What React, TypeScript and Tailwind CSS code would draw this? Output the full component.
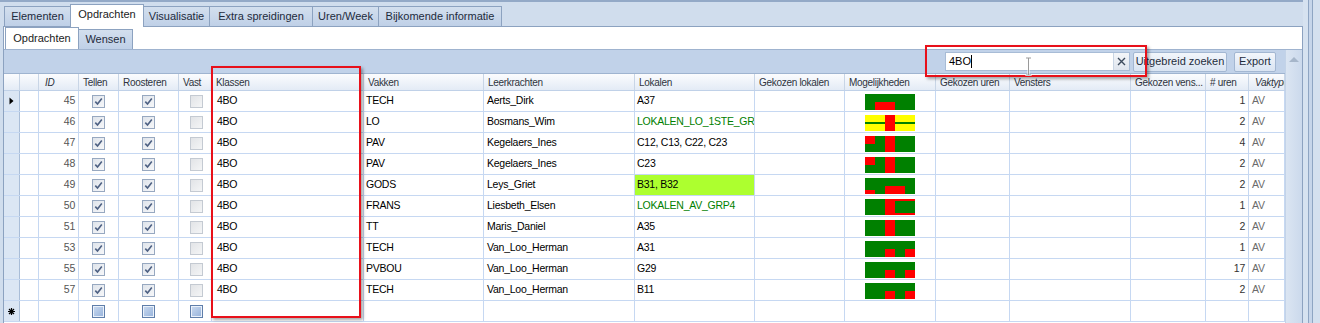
import React from 'react';

const FONT = "font-['Liberation_Sans',Arial,sans-serif]";

type Row = {
  id: number;
  vak: string;
  lk: string;
  lok: string;
  lokStyle?: 'green' | 'lime';
  uren: number;
  pat: number;
};

const rows: Row[] = [
  { id: 45, vak: 'TECH', lk: 'Aerts_Dirk', lok: 'A37', uren: 1, pat: 0 },
  { id: 46, vak: 'LO', lk: 'Bosmans_Wim', lok: 'LOKALEN_LO_1STE_GR', lokStyle: 'green', uren: 2, pat: 1 },
  { id: 47, vak: 'PAV', lk: 'Kegelaers_Ines', lok: 'C12, C13, C22, C23', uren: 4, pat: 2 },
  { id: 48, vak: 'PAV', lk: 'Kegelaers_Ines', lok: 'C23', uren: 2, pat: 2 },
  { id: 49, vak: 'GODS', lk: 'Leys_Griet', lok: 'B31, B32', lokStyle: 'lime', uren: 2, pat: 3 },
  { id: 50, vak: 'FRANS', lk: 'Liesbeth_Elsen', lok: 'LOKALEN_AV_GRP4', lokStyle: 'green', uren: 1, pat: 4 },
  { id: 51, vak: 'TT', lk: 'Maris_Daniel', lok: 'A35', uren: 2, pat: 5 },
  { id: 53, vak: 'TECH', lk: 'Van_Loo_Herman', lok: 'A31', uren: 1, pat: 6 },
  { id: 55, vak: 'PVBOU', lk: 'Van_Loo_Herman', lok: 'G29', uren: 17, pat: 6 },
  { id: 57, vak: 'TECH', lk: 'Van_Loo_Herman', lok: 'B11', uren: 2, pat: 6 },
];

const R = '#ff0000';
const G = '#008000';

// availability bars: [x, y, w, h, colour] on a 50x16 canvas
const patterns: { bg: string; rects: [number, number, number, number, string][] }[] = [
  { bg: G, rects: [[10, 8, 20, 8, R]] },
  { bg: '#ffff00', rects: [[0, 7, 50, 2, G], [20, 0, 10, 16, R]] },
  { bg: G, rects: [[0, 0, 10, 8, R], [20, 0, 10, 16, R]] },
  { bg: G, rects: [[0, 12, 10, 4, R], [20, 8, 20, 8, R]] },
  { bg: G, rects: [[20, 0, 10, 16, R], [20, 0, 30, 2, R], [30, 14, 20, 2, R]] },
  { bg: G, rects: [[20, 0, 10, 16, R]] },
  { bg: G, rects: [[20, 8, 10, 8, R], [40, 8, 10, 8, R]] },
];

const Bar = ({ p }: { p: number }) => {
  const pat = patterns[p];
  return (
    <svg width="50" height="16" viewBox="0 0 50 16" shapeRendering="crispEdges">
      <rect width="50" height="16" fill={pat.bg} />
      {pat.rects.map(([x, y, w, h, c], i) => (
        <rect key={i} x={x} y={y} width={w} height={h} fill={c} />
      ))}
    </svg>
  );
};

const Check = ({ kind }: { kind: 'on' | 'off' | 'new' }) => {
  if (kind === 'new') {
    return (
      <div className="w-[13px] h-[13px] border border-[#5f7eaa] bg-[#eaf1fa] p-[1px]">
        <div className="w-full h-full bg-linear-to-br from-[#c6d7ee] to-[#9ab5dc]" />
      </div>
    );
  }
  if (kind === 'off') {
    return <div className="w-[13px] h-[13px] border border-[#c4cad2] bg-linear-to-br from-[#e2e4e7] to-[#f4f5f6]" />;
  }
  return (
    <div className="w-[13px] h-[13px] border border-[#97a8c0] bg-linear-to-br from-[#dfe4eb] to-[#f6f7f9] flex items-center justify-center">
      <svg width="9" height="9" viewBox="0 0 9 9">
        <path d="M1.3 4.6 L3.5 7 L7.8 1.4" fill="none" stroke="#4e6183" strokeWidth="1.6" />
      </svg>
    </div>
  );
};

const cols = [
  { w: 'w-[16px]', label: '', italic: false },
  { w: 'w-[19px]', label: '', italic: false },
  { w: 'w-[40px]', label: 'ID', italic: true },
  { w: 'w-[40px]', label: 'Tellen', italic: false },
  { w: 'w-[60px]', label: 'Roosteren', italic: false },
  { w: 'w-[33px]', label: 'Vast', italic: false },
  { w: 'w-[152px]', label: 'Klassen', italic: false },
  { w: 'w-[120px]', label: 'Vakken', italic: false },
  { w: 'w-[151px]', label: 'Leerkrachten', italic: false },
  { w: 'w-[120px]', label: 'Lokalen', italic: false },
  { w: 'w-[90px]', label: 'Gekozen lokalen', italic: false },
  { w: 'w-[91px]', label: 'Mogelijkheden', italic: false },
  { w: 'w-[74px]', label: 'Gekozen uren', italic: false },
  { w: 'w-[121px]', label: 'Vensters', italic: false },
  { w: 'w-[75px]', label: 'Gekozen vens...', italic: false },
  { w: 'w-[43px]', label: '# uren', italic: false },
  { w: 'w-[36px]', label: 'Vaktype', italic: true },
];

const cell = 'shrink-0 h-full border-r border-[#c6d8f2] flex items-center overflow-hidden whitespace-nowrap';

const mainTabs = [
  { label: 'Elementen', w: 'w-[66px]', cls: 'border-l border-t' },
  { label: 'Opdrachten', w: 'w-[74px]', cls: 'active' },
  { label: 'Visualisatie', w: 'w-[65px]', cls: 'border-t' },
  { label: 'Extra spreidingen', w: 'w-[103px]', cls: 'border-l border-t' },
  { label: 'Uren/Week', w: 'w-[66px]', cls: 'border-l border-t' },
  { label: 'Bijkomende informatie', w: 'w-[124px]', cls: 'border-l border-t border-r' },
];

const App: React.FC = () => {
  return (
    <div className={`relative w-[1320px] h-[323px] overflow-hidden flex bg-[#d0dded] text-[11px] ${FONT}`}>
      {/* left: tabs + panel */}
      <div className="w-[1303px] flex flex-col border-t-2 border-[#93a9c7]">
        {/* main tab strip */}
        <div className="h-[24px] flex items-end pl-[4px] shrink-0">
          {mainTabs.map((t) =>
            t.cls === 'active' ? (
              <div
                key={t.label}
                className={`${t.w} h-[23px] -mb-px relative z-10 bg-white border-l border-t border-r border-[#8ca2c0] flex items-center justify-center pb-[3px] text-[#1b1b1b]`}
              >
                {t.label}
              </div>
            ) : (
              <div
                key={t.label}
                className={`${t.w} ${t.cls} h-[20px] border-[#8ca2c0] bg-linear-to-b from-[#d3dfee] to-[#bfd0e7] flex items-center justify-center text-[#1e2b3c]`}
              >
                {t.label}
              </div>
            )
          )}
        </div>

        {/* white panel */}
        <div className="flex-1 ml-[3px] bg-white border-l border-t border-r border-[#8ca2c0] flex flex-col min-h-0">
          {/* sub tabs */}
          <div className="h-[22px] flex items-end pl-[1px] shrink-0">
            <div className="w-[74px] h-[22px] border-l border-t border-r border-[#8ca2c0] bg-white flex items-center justify-center text-[#1b1b1b]">
              Opdrachten
            </div>
            <div className="w-[54px] h-[20px] border-t border-r border-[#8ca2c0] bg-linear-to-b from-[#d3dfee] to-[#bfd0e7] flex items-center justify-center text-[#1e2b3c]">
              Wensen
            </div>
          </div>

          {/* grid */}
          <div className="flex-1 flex border-t border-[#9fb3cf] min-h-0">
            <div className="w-[1281px] flex flex-col overflow-hidden">
              {/* toolbar */}
              <div className="h-[23px] shrink-0 bg-[#c1d2e9] flex items-center justify-end pr-[9px]">
                <div className="flex h-[19px] border border-[#a8bcd6] bg-white">
                  <div className="w-[167px] flex items-center pl-[3px] text-black">
                    4BO<span className="w-px h-[13px] bg-black" />
                  </div>
                  <div className="w-[16px] border-l border-[#c9d5e4] bg-linear-to-b from-[#f4f6f9] to-[#dfe5ee] flex items-center justify-center">
                    <svg width="9" height="9" viewBox="0 0 9 9">
                      <path d="M1 1 L8 8 M8 1 L1 8" stroke="#3c4a5c" strokeWidth="1.4" />
                    </svg>
                  </div>
                </div>
                <div className="ml-[3px] w-[94px] h-[20px] rounded-[2px] border border-[#a3b7d2] bg-linear-to-b from-[#f3f6fb] to-[#d9e4f2] flex items-center justify-center text-[#1f2d3d]">
                  Uitgebreid zoeken
                </div>
                <div className="ml-[7px] w-[42px] h-[20px] rounded-[2px] border border-[#a3b7d2] bg-linear-to-b from-[#f3f6fb] to-[#d9e4f2] flex items-center justify-center text-[#1f2d3d]">
                  Export
                </div>
              </div>

              {/* header */}
              <div className="h-[18px] shrink-0 flex border-t border-[#9fb4d0] border-b border-b-[#c0d1e8] bg-linear-to-b from-[#fbfcfe] to-[#e3ebf6] text-[10px] tracking-[-0.3px]">
                {cols.map((c, i) => (
                  <div
                    key={i}
                    className={`${c.w} shrink-0 h-full border-r border-[#c8d5e6] flex items-center overflow-hidden whitespace-nowrap text-[#2e3440] ${c.italic ? 'italic pl-[6px]' : 'pl-[4px]'}`}
                  >
                    {c.label}
                  </div>
                ))}
              </div>

              {/* rows */}
              {rows.map((r, idx) => (
                <div key={r.id} className="h-[21px] shrink-0 flex border-b border-[#c6d8f2] text-black text-[10.5px] tracking-[-0.25px]">
                  <div className={`${cols[0].w} ${cell} bg-[#dbe6f4] justify-center border-r-[#a9bdd8]`}>
                    {idx === 0 && (
                      <svg width="5" height="8" viewBox="0 0 5 8">
                        <path d="M0.5 0.5 L4.5 4 L0.5 7.5 Z" fill="#000" />
                      </svg>
                    )}
                  </div>
                  <div className={`${cols[1].w} ${cell}`} />
                  <div className={`${cols[2].w} ${cell} justify-end pr-[3px] text-[#555]`}>{r.id}</div>
                  <div className={`${cols[3].w} ${cell} justify-center`}><Check kind="on" /></div>
                  <div className={`${cols[4].w} ${cell} justify-center`}><Check kind="on" /></div>
                  <div className={`${cols[5].w} ${cell} justify-center pl-[3px]`}><Check kind="off" /></div>
                  <div className={`${cols[6].w} ${cell} pl-[5px]`}>4BO</div>
                  <div className={`${cols[7].w} ${cell} pl-[2px]`}>{r.vak}</div>
                  <div className={`${cols[8].w} ${cell} pl-[3px]`}>{r.lk}</div>
                  <div
                    className={`${cols[9].w} ${cell} pl-[2px] ${
                      r.lokStyle === 'green' ? 'text-[#008000]' : ''
                    } ${r.lokStyle === 'lime' ? 'bg-[#adff2f]' : ''}`}
                  >
                    {r.lok}
                  </div>
                  <div className={`${cols[10].w} ${cell}`} />
                  <div className={`${cols[11].w} ${cell} justify-center pt-[2px]`}><Bar p={r.pat} /></div>
                  <div className={`${cols[12].w} ${cell}`} />
                  <div className={`${cols[13].w} ${cell}`} />
                  <div className={`${cols[14].w} ${cell}`} />
                  <div className={`${cols[15].w} ${cell} justify-end pr-[3px] text-[#333]`}>{r.uren}</div>
                  <div className={`${cols[16].w} ${cell} pl-[3px] text-[#6a6a6a]`}>AV</div>
                </div>
              ))}

              {/* new row */}
              <div className="h-[21px] shrink-0 flex border-b border-[#c6d8f2]">
                <div className={`${cols[0].w} ${cell} bg-[#dbe6f4] justify-center border-r-[#a9bdd8]`}>
                  <svg width="7" height="7" viewBox="0 0 7 7">
                    <path d="M3.5 0 V7 M0 3.5 H7 M1 1 L6 6 M6 1 L1 6" stroke="#000" strokeWidth="1.2" />
                  </svg>
                </div>
                <div className={`${cols[1].w} ${cell}`} />
                <div className={`${cols[2].w} ${cell}`} />
                <div className={`${cols[3].w} ${cell} justify-center`}><Check kind="new" /></div>
                <div className={`${cols[4].w} ${cell} justify-center`}><Check kind="new" /></div>
                <div className={`${cols[5].w} ${cell} justify-center pl-[3px]`}><Check kind="new" /></div>
                {cols.slice(6).map((c, i) => (
                  <div key={i} className={`${c.w} ${cell}`} />
                ))}
              </div>
            </div>

            {/* vertical scrollbar */}
            <div className="w-[17px] shrink-0 bg-linear-to-r from-[#dbe5f2] to-[#cbd9ec] border-l border-[#c3d3e8] flex justify-center pt-[7px]">
              <svg width="10" height="5" viewBox="0 0 10 5">
                <path d="M0 5 L5 0 L10 5 Z" fill="#a6b6ca" />
              </svg>
            </div>
          </div>
        </div>
      </div>

      {/* right frame strip */}
      <div className="w-[17px] flex">
        <div className="w-[5px] bg-[#d6e2f0]" />
        <div className="w-[5px] border-l border-r border-[#8ea5c3] bg-[#c6d5ea]" />
        <div className="flex-1 bg-[#d4e0ef]" />
      </div>

      {/* annotation: Klassen column */}
      <div className="absolute left-[211px] top-[66px] w-[150px] h-[252px] border-2 border-[#e8101a] shadow-[2px_2px_3px_rgba(0,0,0,0.35)] pointer-events-none" />
      {/* annotation: search box */}
      <div className="absolute left-[925px] top-[45px] w-[222px] h-[32px] border-2 border-[#e8101a] shadow-[2px_2px_3px_rgba(0,0,0,0.35)] pointer-events-none" />

      {/* mouse I-beam */}
      <svg className="absolute left-[1025px] top-[57px]" width="7" height="19" viewBox="0 0 7 19">
        <path d="M0.5 0.5 H6.5 M3.5 0.5 V18.5 M0.5 18.5 H6.5" stroke="#fff" strokeWidth="2" fill="none" />
        <path d="M1 1 H6 M3.5 1 V18 M1 18 H6" stroke="#9a9a9a" strokeWidth="1" fill="none" />
      </svg>
    </div>
  );
};

export default App;
